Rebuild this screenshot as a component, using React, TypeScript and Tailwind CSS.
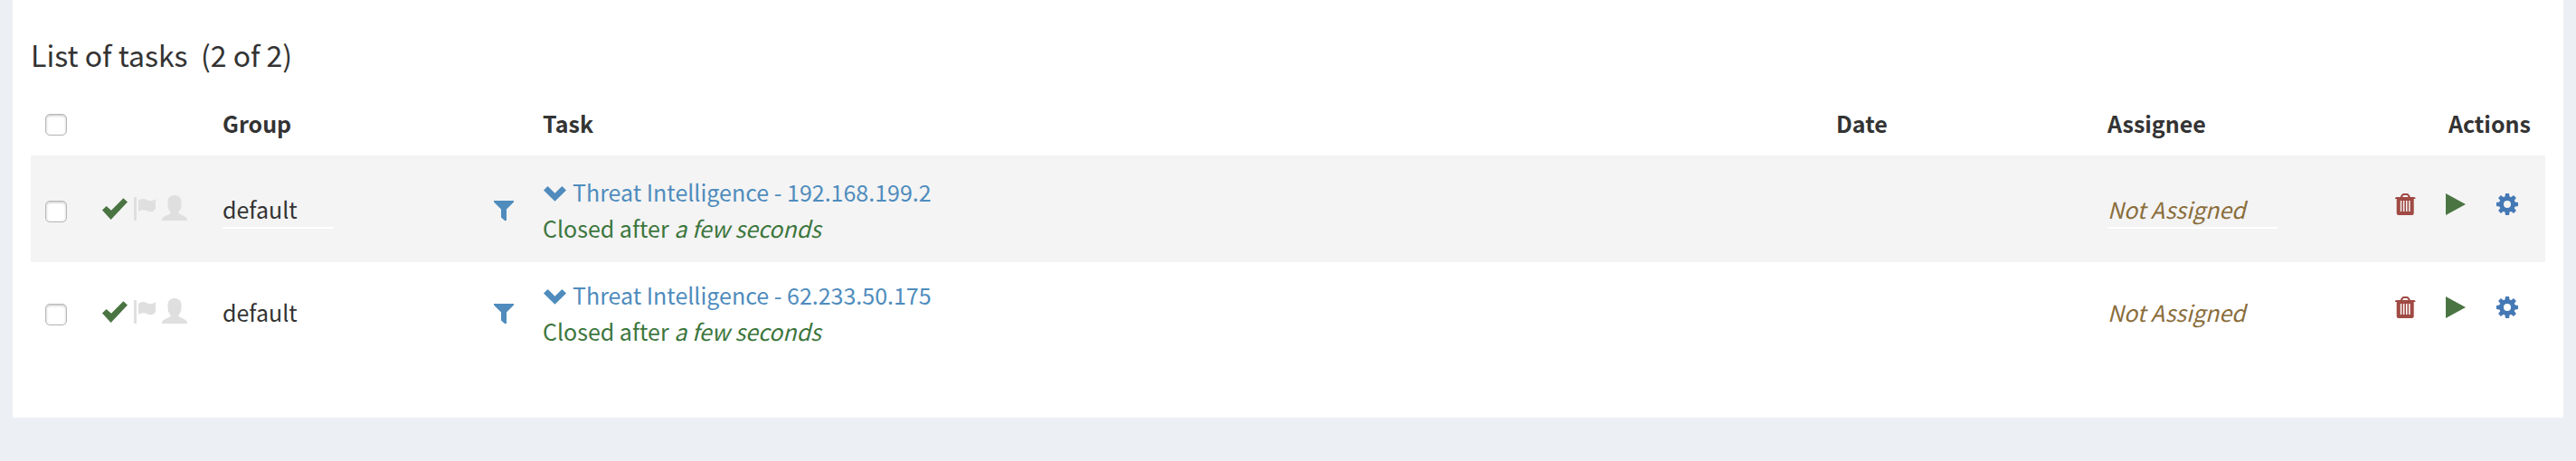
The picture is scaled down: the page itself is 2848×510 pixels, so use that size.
import React from "react";

type Task = { id: string; group: string; title: string; elapsed: string };

const tasks: Task[] = [
  { id: "1", group: "default", title: "Threat Intelligence - 192.168.199.2", elapsed: "a few seconds" },
  { id: "2", group: "default", title: "Threat Intelligence - 62.233.50.175", elapsed: "a few seconds" },
];

function CheckIcon() {
  return (
    <svg viewBox="0 0 28 28" className="size-7 fill-[#4a7542]" aria-hidden="true">
      <path d="M0 16.500 4.600 12 10 16.800 23.400 3.200 28 7.600 9.600 27Z" />
    </svg>
  );
}

function FlagIcon() {
  return (
    <svg viewBox="0 0 28 28" className="size-7 fill-[#dfdfdf]" aria-hidden="true">
      <rect x="2" y="2" width="3" height="26" rx="0.8" />
      <path d="M7 6.200C9 3.600 13 3.400 16 5c3.500 1.800 6.500 1.600 10-1v11c-2.200 3.300-5.800 3.800-9 2.400-3.500-1.500-6.500-1.600-10 0.600Z" />
    </svg>
  );
}

function UserIcon() {
  return (
    <svg viewBox="0 0 28 28" className="size-7 fill-[#dfdfdf]" aria-hidden="true">
      <path d="M14 0c4.600 0 7.500 3 7.500 7v3.500c0 3.500-1 6-3 7.800v1.700c2 1.300 5.500 2.700 7.600 4 1.400 1 1.900 2 1.900 4H0c0-2 0.500-3 1.900-4 2.100-1.300 5.600-2.700 7.600-4v-1.700c-2-1.800-3-4.300-3-7.800V7c0-4 2.900-7 7.500-7Z" />
    </svg>
  );
}

function FilterIcon() {
  return (
    <svg viewBox="0 0 22 22" className="size-[22px] fill-[#4f8cbd]" aria-hidden="true">
      <path d="M0 0h22v1.500L14 9.500V22h-2L8 18.500V9.500L0 1.500Z" />
    </svg>
  );
}

function ChevronIcon() {
  return (
    <svg viewBox="0 0 28 20" className="mt-1 h-5 w-7 fill-[#4f8cbd]" aria-hidden="true">
      <path d="M1 6.500 5 2.500q0.700-0.400 1.200 0L13.500 9.700 20.800 2.500q0.500-0.400 1.200 0l4 4L14 18.200q-0.500 0.400-1 0Z" />
    </svg>
  );
}

function TrashIcon() {
  return (
    <svg viewBox="0 0 24 24" className="size-6 fill-[#a04a44]" aria-hidden="true">
      <path
        fillRule="evenodd"
        d="M6 4V3L8 0.600Q8.500 0 9.300 0h4q0.800 0 1.300 0.600L16.600 3v1h4.700L22.500 5v1H20.700v16q0 2-2 2h-15q-2 0-2-2V6H0V5L1.200 4ZM8 4h6.600L13.300 2H9.400ZM5.800 8v12h1.500V8ZM8.900 8v12h1.500V8ZM12 8v12h1.500V8ZM15.100 8v12h1.500V8Z"
      />
    </svg>
  );
}

function PlayIcon() {
  return (
    <svg viewBox="0 0 24 24" className="size-6 fill-[#4a7542]" aria-hidden="true">
      <path d="M0 0 22 12 0 24Z" />
    </svg>
  );
}

const teeth = [0, 45, 90, 135, 180, 225, 270, 315];

function GearIcon() {
  return (
    <svg viewBox="0 0 24 24" className="size-6 fill-[#4579b5]" aria-hidden="true">
      <path fillRule="evenodd" d="M12 3a9 9 0 1 0 0 18a9 9 0 1 0 0-18ZM12 8a4 4 0 1 1 0 8a4 4 0 1 1 0-8Z" />
      {teeth.map((angle) => (
        <path key={angle} d="M9.300 4.500 10 0h4l0.700 4.500Z" transform={`rotate(${angle} 12 12)`} />
      ))}
    </svg>
  );
}

function Tick({ label }: { label: string }) {
  return (
    <input
      type="checkbox"
      aria-label={label}
      className="mt-1 block size-6 appearance-none rounded-[5px] border border-[#b8b8b8] bg-white shadow-[inset_0_1px_3px_#00000040]"
    />
  );
}

function TaskRow({ task, first }: { task: Task; first: boolean }) {
  const cell = first
    ? "border-t-4 border-[#f3f3f3] bg-[#f4f4f4] px-4 py-4"
    : "border-t-2 border-[#f4f4f4] px-4 py-4";
  return (
    <tr>
      <td className={cell}>
        <Tick label={`Select ${task.title}`} />
      </td>
      <td className={cell}>
        <div className="mb-1 flex gap-[5px]">
          <CheckIcon />
          <FlagIcon />
          <UserIcon />
        </div>
      </td>
      <td className={cell}>
        <span className="block w-[123px] border-b-2 border-white">{task.group}</span>
      </td>
      <td className={cell}>
        <button type="button" aria-label="Filter by this group" className="mt-0.5 block">
          <FilterIcon />
        </button>
      </td>
      <td className={cell}>
        <a href="#task" className="flex items-center gap-[5px] text-[#4f8cbd]">
          <ChevronIcon />
          <span>{task.title}</span>
        </a>
        <div className="text-[#3c763d]">
          Closed after <em>{task.elapsed}</em>
        </div>
      </td>
      <td className={cell}></td>
      <td className={cell}>
        <em className="block w-[188px] border-b-2 border-white text-[#8a6d3b]">Not Assigned</em>
      </td>
      <td className={cell}>
        <div className="mb-3 flex justify-end gap-8 pr-3.5">
          <button type="button" aria-label="Delete task"><TrashIcon /></button>
          <button type="button" aria-label="Start task"><PlayIcon /></button>
          <button type="button" aria-label="Run responders"><GearIcon /></button>
        </div>
      </td>
    </tr>
  );
}

export default function App() {
  return (
    <div className="min-h-screen bg-[#ecf0f5] px-3.5 pb-12 font-['Noto_Sans_CJK_SC','Open_Sans',sans-serif] text-[25px] leading-10 text-[#333]">
      <main className="bg-white px-5 pt-10 pb-[60px]">
        <h1 className="mb-5 text-[32px] leading-10 whitespace-pre">List of tasks  (2 of 2)</h1>
        <table className="w-full table-fixed border-separate border-spacing-0 text-left">
          <colgroup>
            <col className="w-[63px]" />
            <col className="w-[133px]" />
            <col className="w-[300px]" />
            <col className="w-[54px]" />
            <col />
            <col className="w-[300px]" />
            <col className="w-[300px]" />
            <col className="w-[200px]" />
          </colgroup>
          <thead>
            <tr>
              <th className="p-4"><Tick label="Select all tasks" /></th>
              <th className="p-4"></th>
              <th className="p-4">Group</th>
              <th className="p-4"></th>
              <th className="p-4">Task</th>
              <th className="p-4">Date</th>
              <th className="p-4">Assignee</th>
              <th className="p-4 text-right">Actions</th>
            </tr>
          </thead>
          <tbody>
            {tasks.map((task, index) => (
              <TaskRow key={task.id} task={task} first={index === 0} />
            ))}
          </tbody>
        </table>
      </main>
    </div>
  );
}
